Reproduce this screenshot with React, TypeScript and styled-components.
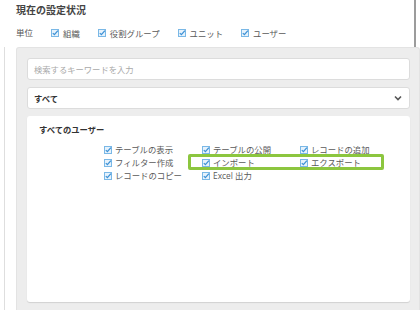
import React from 'react'
import styled, { createGlobalStyle } from 'styled-components'

const GlobalStyle = createGlobalStyle`
    html, body {
        margin: 0;
        padding: 0;
        background: #ffffff;
    }
    body {
        font-family: "Open Sans", "Noto Sans CJK JP", sans-serif;
        color: #555;
    }
`

const Page = styled.div`
    width: 420px;
    height: 310px;
    overflow: hidden;
    background: #fff;
`

const Frame = styled.div`
    width: 414px;
    height: 310px;
    border-right: 2px solid #9c9c9c;
    display: flex;
    flex-direction: column;
`

const Header = styled.div`
    padding: 0 16px;
    height: 47px;
    box-sizing: border-box;
`

const Title = styled.div`
    font-size: 10px;
    font-weight: 700;
    line-height: 20px;
    color: #444;
`

const UnitRow = styled.div`
    margin-top: 6px;
    display: flex;
    align-items: center;
    gap: 18px;
    font-size: 8.5px;
    line-height: 14px;
    color: #555;
`

const Body = styled.div`
    flex: 1;
    display: flex;
    padding-left: 4px;
`

const Rail = styled.div`
    border-left: 1px solid #dedede;
    padding-left: 11px;
    flex: 1;
    display: flex;
`

const Panel = styled.div`
    flex: 1;
    margin-right: 7px;
    background: #ededed;
    border: 1px solid #e3e3e3;
    border-bottom: none;
    border-radius: 3px 3px 0 0;
    padding: 10px 9px 0 10px;
    display: flex;
    flex-direction: column;
    gap: 7px;
`

const SearchInput = styled.div`
    height: 22px;
    box-sizing: border-box;
    background: #fff;
    border: 1px solid #dcdcdc;
    border-radius: 3px;
    padding: 0 6px;
    display: flex;
    align-items: center;
    font-size: 8.3px;
    color: #a9a9a9;
`

const Select = styled.div`
    height: 22px;
    box-sizing: border-box;
    background: #fff;
    border: 1px solid #dcdcdc;
    border-radius: 3px;
    padding: 0 7px 0 6px;
    display: flex;
    align-items: center;
    justify-content: space-between;
    font-size: 8.3px;
    font-weight: 700;
    color: #333;
`

const Card = styled.div`
    height: 186px;
    box-sizing: border-box;
    background: #fff;
    border-radius: 3px;
    box-shadow: 0 1px 1px rgba(0, 0, 0, 0.12);
    padding: 7px 12px;
`

const CardTitle = styled.div`
    font-size: 8.3px;
    font-weight: 700;
    line-height: 14px;
    color: #333;
`

const PermGrid = styled.div`
    position: relative;
    margin: 6px 0 0 65px;
    display: grid;
    grid-template-columns: 98px 98px 98px;
    grid-auto-rows: 13px;
`

const Highlight = styled.div`
    position: absolute;
    left: 84px;
    top: 11px;
    width: 196px;
    height: 16px;
    box-sizing: border-box;
    border: 3px solid #8cc63f;
    border-radius: 2px;
    pointer-events: none;
`

const Check = styled.label<{ $gap?: number }>`
    display: flex;
    align-items: center;
    gap: ${p => p.$gap ?? 4}px;
    font-size: 8.4px;
    line-height: 13px;
    color: #5a5a5a;
    white-space: nowrap;
`

function CheckIcon() {
    return (
        <svg width="8" height="8" viewBox="0 0 8 8">
            <rect x="0.5" y="0.5" width="7" height="7" fill="#e6f2fc" stroke="#7ab8e6" strokeWidth="1" />
            <path d="M1.8 4.1 L3.4 5.6 L6.9 1.6" fill="none" stroke="#3d92d6" strokeWidth="1.3" />
        </svg>
    )
}

function Chevron() {
    return (
        <svg width="8" height="6" viewBox="0 0 8 6">
            <path d="M1 1.5 L4 4.5 L7 1.5" fill="none" stroke="#555" strokeWidth="1.6" />
        </svg>
    )
}

const UNITS = ['組織', '役割グループ', 'ユニット', 'ユーザー']

const PERMISSIONS = [
    'テーブルの表示', 'テーブルの公開', 'レコードの追加',
    'フィルター作成', 'インポート', 'エクスポート',
    'レコードのコピー', 'Excel 出力',
]

function App() {
    return (
        <Page>
            <GlobalStyle />
            <Frame>
                <Header>
                    <Title>現在の設定状況</Title>
                    <UnitRow>
                        <span>単位</span>
                        {UNITS.map(u => (
                            <Check key={u}>
                                <CheckIcon />
                                {u}
                            </Check>
                        ))}
                    </UnitRow>
                </Header>
                <Body>
                    <Rail>
                        <Panel>
                            <SearchInput>検索するキーワードを入力</SearchInput>
                            <Select>
                                <span>すべて</span>
                                <Chevron />
                            </Select>
                            <Card>
                                <CardTitle>すべてのユーザー</CardTitle>
                                <PermGrid>
                                    {PERMISSIONS.map(p => (
                                        <Check key={p} $gap={3}>
                                            <CheckIcon />
                                            {p}
                                        </Check>
                                    ))}
                                    <Highlight />
                                </PermGrid>
                            </Card>
                        </Panel>
                    </Rail>
                </Body>
            </Frame>
        </Page>
    )
}

export default App
